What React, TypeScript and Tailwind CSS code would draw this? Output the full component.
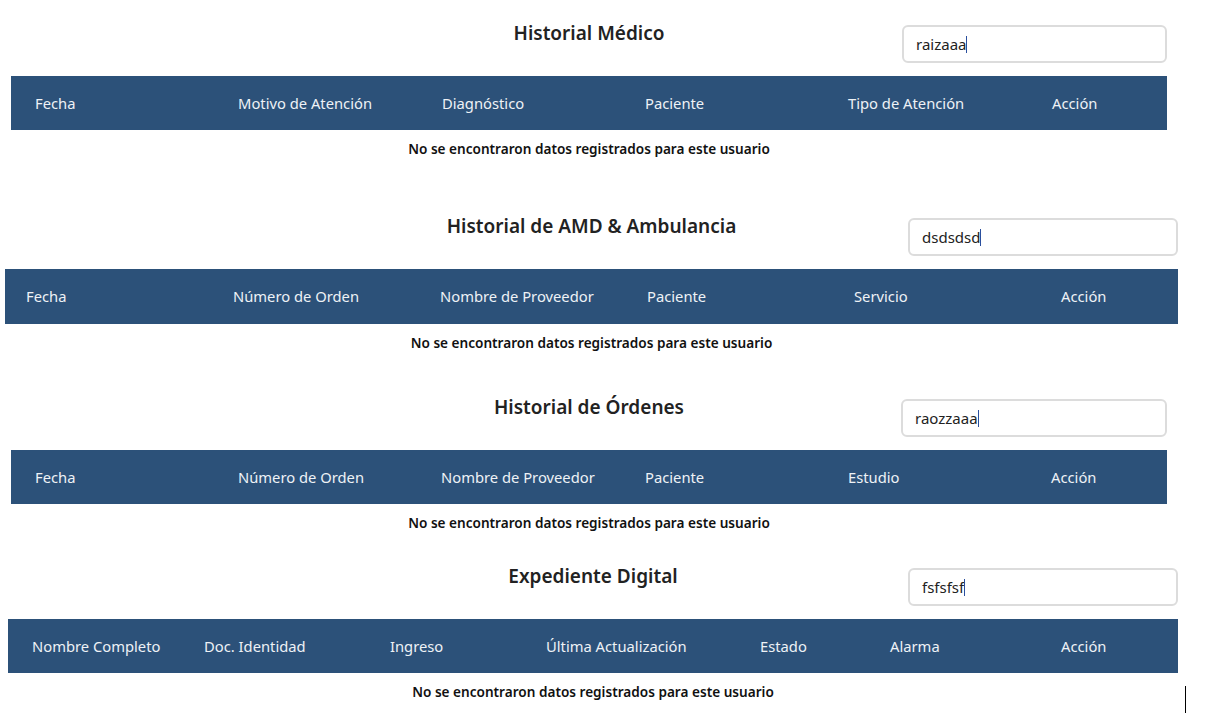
const font = { fontFamily: '"Noto Sans", "Liberation Sans", sans-serif' }

type Section = {
  title: string
  query: string
  columns: string[]
  grid: string
  wrap: string
  head: string
  input: string
}

const sections: Section[] = [
  {
    title: "Historial Médico",
    query: "raizaaa",
    columns: ["Fecha", "Motivo de Atención", "Diagnóstico", "Paciente", "Tipo de Atención", "Acción"],
    grid: "grid-cols-[203px_204px_203px_203px_204px_1fr] pl-[24px]",
    wrap: "mt-[23px] ml-[11px] w-[1156px]",
    head: "h-[54px]",
    input: "w-[265px]",
  },
  {
    title: "Historial de AMD & Ambulancia",
    query: "dsdsdsd",
    columns: ["Fecha", "Número de Orden", "Nombre de Proveedor", "Paciente", "Servicio", "Acción"],
    grid: "grid-cols-[207px_207px_207px_207px_207px_1fr] pl-[21px]",
    wrap: "mt-[58px] ml-[5px] w-[1173px]",
    head: "h-[55px]",
    input: "w-[270px]",
  },
  {
    title: "Historial de Órdenes",
    query: "raozzaaa",
    columns: ["Fecha", "Número de Orden", "Nombre de Proveedor", "Paciente", "Estudio", "Acción"],
    grid: "grid-cols-[203px_203px_204px_203px_203px_1fr] pl-[24px]",
    wrap: "mt-[45px] ml-[11px] w-[1156px]",
    head: "h-[54px]",
    input: "w-[266px]",
  },
  {
    title: "Expediente Digital",
    query: "fsfsfsf",
    columns: [
      "Nombre Completo",
      "Doc. Identidad",
      "Ingreso",
      "Última Actualización",
      "Estado",
      "Alarma",
      "Acción",
    ],
    grid: "grid-cols-[172px_186px_156px_214px_130px_171px_1fr] pl-[24px]",
    wrap: "mt-[34px] ml-[8px] w-[1170px]",
    head: "h-[54px]",
    input: "w-[270px]",
  },
]

function SearchBox({ value, width }: { value: string; width: string }) {
  return (
    <div
      className={`${width} mt-[2px] h-[38px] rounded-[6px] border-2 border-[#dcdcdc] bg-white pl-[12px] flex items-center text-[15px] text-[#222]`}
    >
      <span>{value}</span>
      <span className="inline-block w-px h-[17px] bg-[#2a4f9e]" />
    </div>
  )
}

function HistoryTable({ s, last }: { s: Section; last?: boolean }) {
  return (
    <section className={s.wrap}>
      <div className="grid grid-cols-[1fr_auto_1fr] items-start">
        <div />
        <h2 className="text-[19px] leading-[20px] font-semibold text-[#222]">{s.title}</h2>
        <div className="flex justify-end">
          <SearchBox value={s.query} width={s.input} />
        </div>
      </div>

      <div className={`mt-[13px] bg-[#2c5179] grid items-center text-[14.75px] text-[#eef2f6] ${s.grid} ${s.head}`}>
        {s.columns.map((c) => (
          <div key={c} className="whitespace-nowrap">
            {c}
          </div>
        ))}
      </div>

      <div className="relative mt-[10px] h-[18px] flex items-center justify-center text-[13.6px] font-semibold text-[#111]">
        No se encontraron datos registrados para este usuario
        {last && <span className="absolute left-[1177px] top-[3px] w-px h-[27px] bg-black" />}
      </div>
    </section>
  )
}

export default function App() {
  return (
    <main className="w-[1212px] h-[723px] bg-white overflow-hidden flex flex-col" style={font}>
      {sections.map((s, i) => (
        <HistoryTable key={s.title} s={s} last={i === sections.length - 1} />
      ))}
    </main>
  )
}
